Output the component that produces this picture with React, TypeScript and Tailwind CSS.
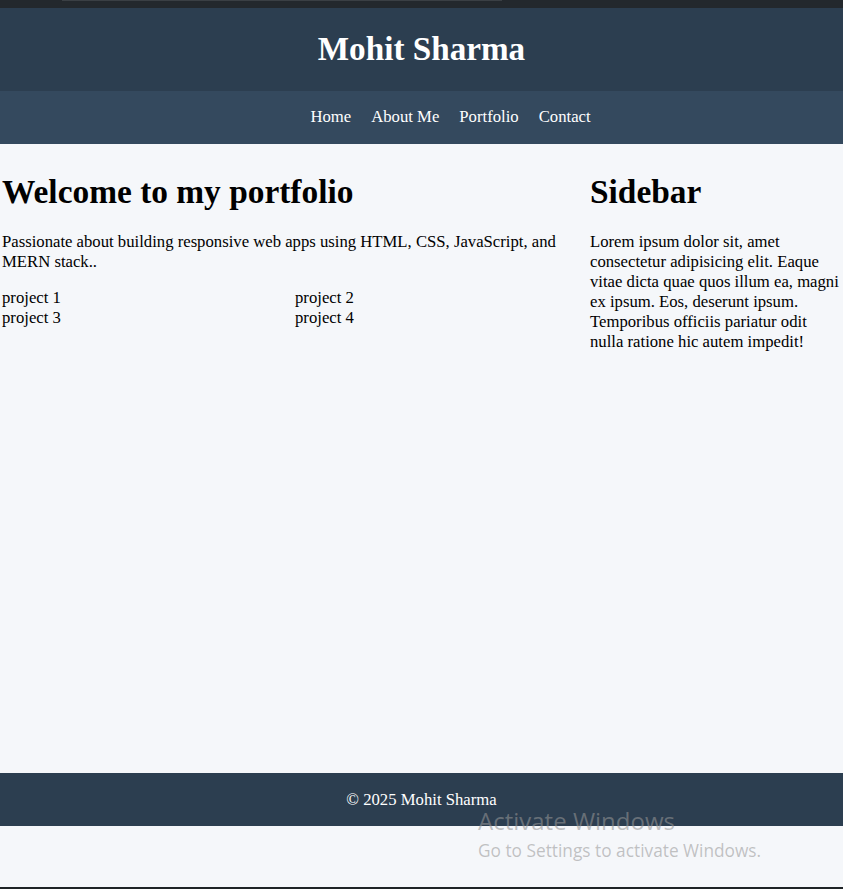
import React from "react";

export default function App() {
  const serif = { fontFamily: '"Liberation Serif", "Times New Roman", serif' };
  return (
    <div className="relative w-[843px] h-[889px] overflow-hidden bg-[#f5f7fa] text-black" style={serif}>
      <div className="flex flex-col h-full">
        <div className="relative h-[8px] bg-[#23282d] shrink-0">
          <div className="absolute left-[62px] top-0 w-[440px] h-[1px] bg-[#3a3f44]" />
        </div>
        <header className="h-[83px] shrink-0 bg-[#2c3e50] flex items-center justify-center pb-[3px]">
          <h1 className="text-[33.2px] leading-[37px] font-bold text-white">Mohit Sharma</h1>
        </header>
        <nav className="h-[53px] shrink-0 bg-[#34495e] flex items-center justify-center pl-[38px] pb-[2px]">
          {["Home", "About Me", "Portfolio", "Contact"].map((l) => (
            <a key={l} className="ml-[20px] text-white text-[16.7px] leading-[20px]">{l}</a>
          ))}
        </nav>
        <main className="flex h-[629px] shrink-0">
          <section className="w-[588px] shrink-0 pl-[2px] pt-[9px]">
            <h1 className="text-[33.4px] leading-[37px] font-bold mt-[20px] mb-[22px]">Welcome to my portfolio</h1>
            <p className="text-[16.7px] leading-[20px] mb-[16px]">
              Passionate about building responsive web apps using HTML, CSS, JavaScript, and MERN stack..
            </p>
            <div className="grid grid-cols-2 text-[16.7px] leading-[20px]">
              <div>project 1</div>
              <div>project 2</div>
              <div>project 3</div>
              <div>project 4</div>
            </div>
          </section>
          <aside className="flex-1 pl-[2px] pt-[9px]">
            <h2 className="text-[33.4px] leading-[37px] font-bold mt-[20px] mb-[22px]">Sidebar</h2>
            <p className="text-[16.7px] leading-[20px]">
              Lorem ipsum dolor sit, amet consectetur adipisicing elit. Eaque vitae dicta quae quos illum ea, magni ex ipsum. Eos, deserunt ipsum. Temporibus officiis pariatur odit nulla ratione hic autem impedit!
            </p>
          </aside>
        </main>
        <footer className="h-[53px] shrink-0 bg-[#2c3e50] flex items-center justify-center">
          <p className="text-white text-[16.7px] leading-[20px]">© 2025 Mohit Sharma</p>
        </footer>
        <div className="flex-1" />
        <div className="h-[2px] shrink-0 bg-[#1e2326]" />
      </div>
      <div
        className="absolute left-[478px] top-[805px] text-[rgba(150,150,150,0.56)] pointer-events-none"
        style={{ fontFamily: '"Open Sans", "Noto Sans", sans-serif' }}
      >
        <div className="text-[24px] leading-[32px]">Activate Windows</div>
        <div className="text-[17.3px] leading-[22px] mt-[3px]">Go to Settings to activate Windows.</div>
      </div>
    </div>
  );
}
